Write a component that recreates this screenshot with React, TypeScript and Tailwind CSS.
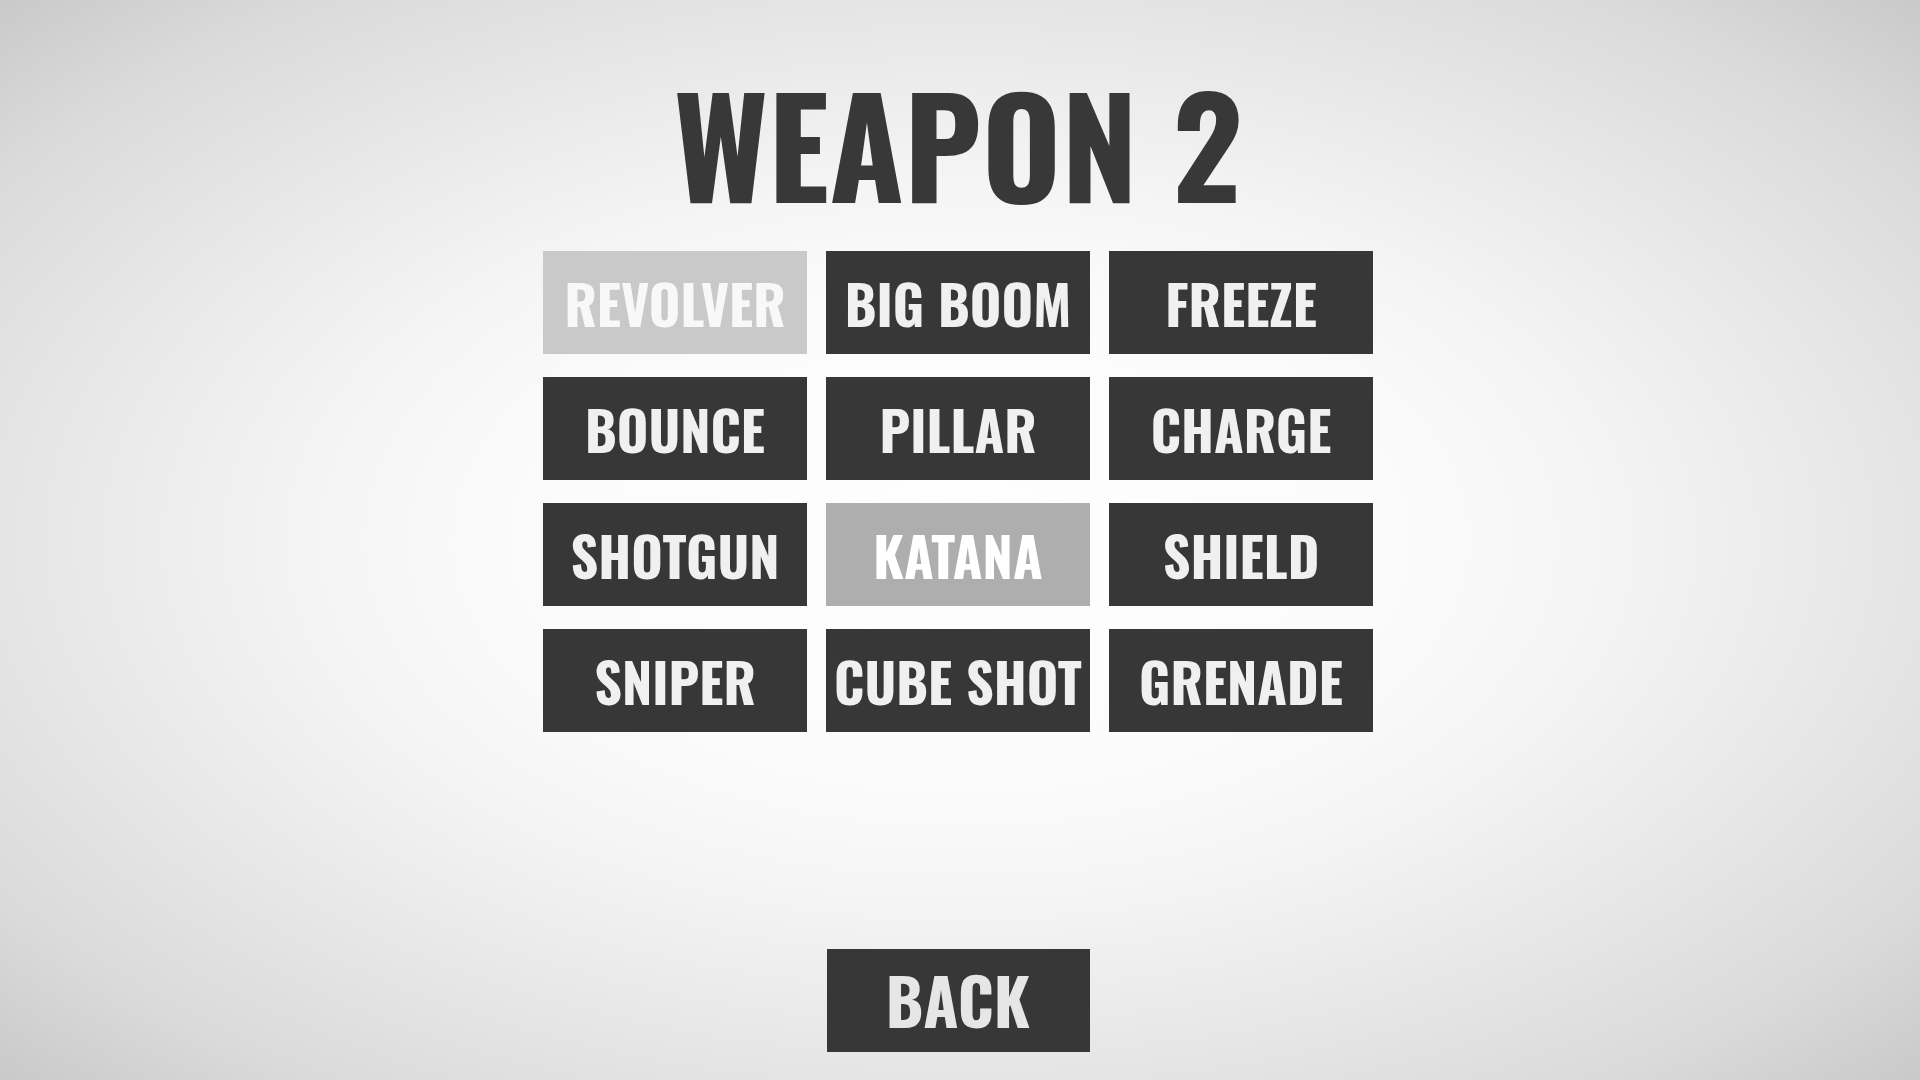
type Variant = "normal" | "equipped" | "selected";

const weapons: { name: string; variant: Variant }[] = [
  { name: "REVOLVER", variant: "equipped" },
  { name: "BIG BOOM", variant: "normal" },
  { name: "FREEZE", variant: "normal" },
  { name: "BOUNCE", variant: "normal" },
  { name: "PILLAR", variant: "normal" },
  { name: "CHARGE", variant: "normal" },
  { name: "SHOTGUN", variant: "normal" },
  { name: "KATANA", variant: "selected" },
  { name: "SHIELD", variant: "normal" },
  { name: "SNIPER", variant: "normal" },
  { name: "CUBE SHOT", variant: "normal" },
  { name: "GRENADE", variant: "normal" },
];

const variantClasses: Record<Variant, string> = {
  normal: "bg-[#373737] text-[#f0f0f0]",
  equipped: "bg-[#c9c9c9] text-[#f8f8f8]",
  selected: "bg-[#aeaeae] text-white",
};

export default function App() {
  return (
    <main className="flex min-h-screen flex-col items-center bg-[radial-gradient(ellipse_at_center,#fefefe_0%,#fcfcfc_25%,#fafafa_35%,#f4f4f4_48%,#ececec_60%,#e5e5e5_70%,#dadada_85%,#c9c9c9_100%)] pt-[67px] pr-1 pb-7 font-[Oswald,'Open_Sans_Condensed','Roboto_Condensed',sans-serif] font-bold">
      <h1 className="text-[136px] leading-[150px] text-[#383838]">WEAPON 2</h1>

      <section
        aria-label="Weapons"
        className="mt-[34px] grid w-full max-w-[830px] grid-cols-3 gap-x-[19px] gap-y-[23px]"
      >
        {weapons.map(({ name, variant }) => (
          <button
            key={name}
            type="button"
            disabled={variant === "equipped"}
            aria-pressed={variant === "selected"}
            className={`flex h-[103px] items-center justify-center text-[54px] leading-none whitespace-nowrap ${variantClasses[variant]}`}
          >
            {name}
          </button>
        ))}
      </section>

      <button
        type="button"
        className="mt-auto flex h-[103px] w-[263px] items-center justify-center bg-[#373737] pb-1 text-[64px] leading-none text-[#e6e6e6]"
      >
        BACK
      </button>
    </main>
  );
}
